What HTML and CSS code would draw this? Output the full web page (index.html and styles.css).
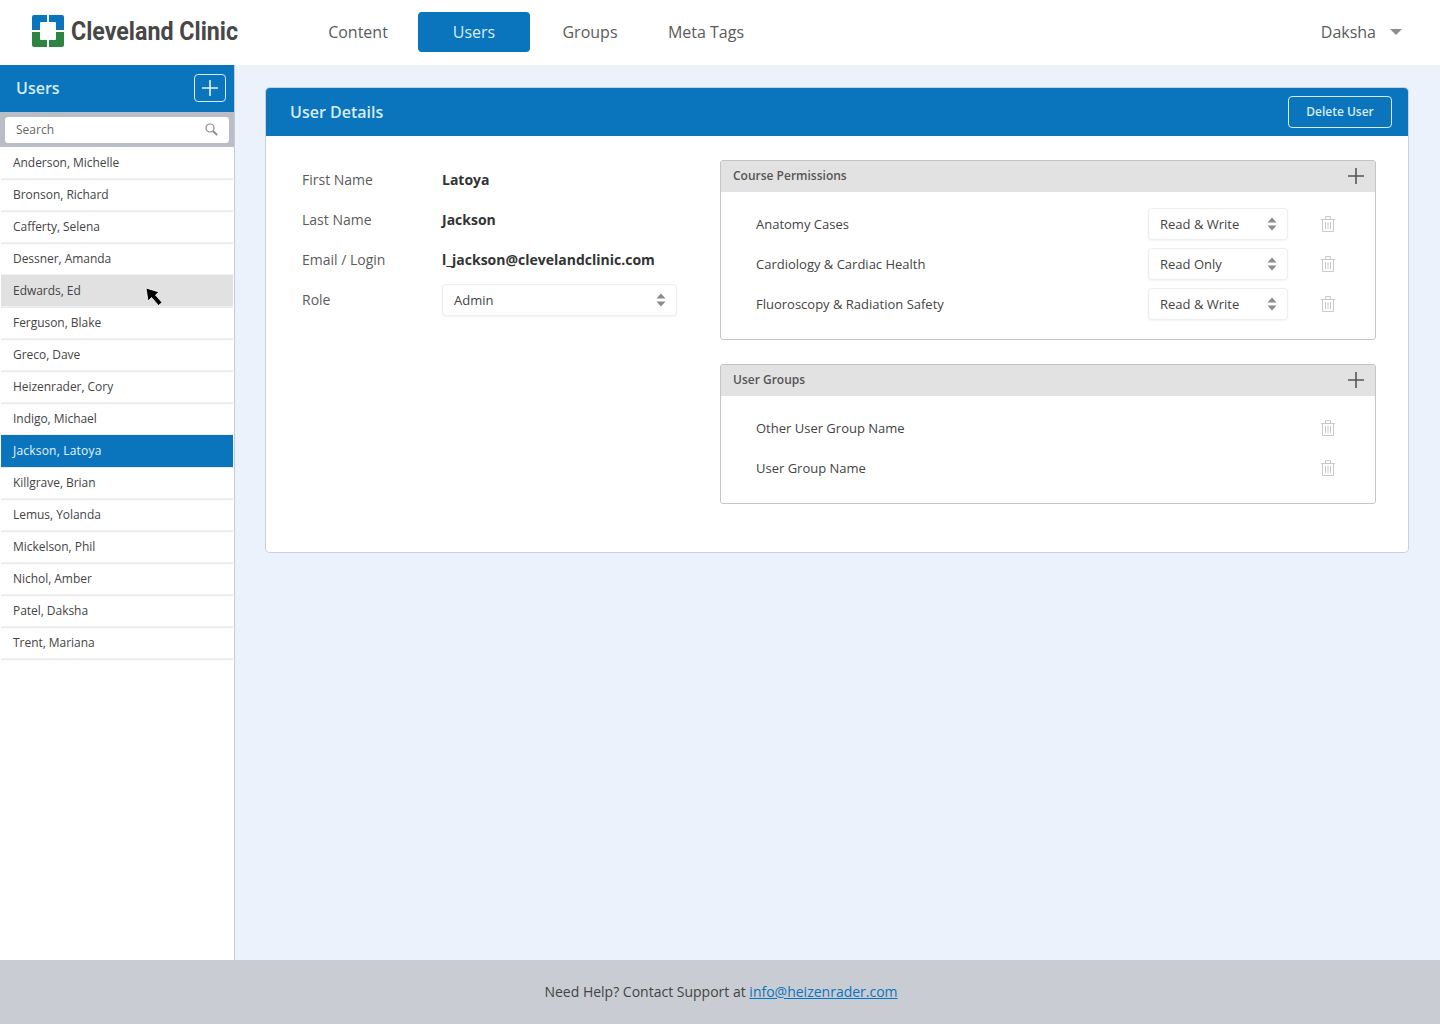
FILE: index.html
```html
<!DOCTYPE html>
<html lang="en">
<head>
<meta charset="utf-8">
<title>Users</title>
<link rel="stylesheet" href="styles.css">
</head>
<body>
<svg class="sprites" width="0" height="0" aria-hidden="true">
  <symbol id="updown" viewBox="0 0 10 14"><path d="M5 0.5 9.5 5.5H0.5Z M5 13.5 0.5 8.5H9.5Z" fill="#8b8b8b"/></symbol>
  <symbol id="trash" viewBox="0 0 14 16"><path d="M1.5 3.5V15.5H12.5V3.5M0 3.5H14M4.5 3.5V0.5H9.5V3.5M4.5 6V13M7 6V13M9.5 6V13" fill="none" stroke="#c9c9c9"/></symbol>
  <symbol id="plus" viewBox="0 0 16 16"><path d="M8 0V16M0 8H16" fill="none" stroke-width="1.6" stroke="currentColor"/></symbol>
</svg>
<header class="topbar">
  <div class="logo">
    <svg class="logo-mark" viewBox="0 0 32 32" width="32" height="32">
      <path d="M2 0H15V7H9Q8 7 8 8V15H0V2Q0 0 2 0Z M17 0H30Q32 0 32 2V15H24V8Q24 7 23 7H17Z" fill="#0a74bc"/>
      <path d="M0 17H8V24Q8 25 9 25H15V32H2Q0 32 0 30Z M32 17V30Q32 32 30 32H17V25H23Q24 25 24 24V17Z" fill="#2c8542"/>
    </svg>
    <span class="logo-text">Cleveland Clinic</span>
  </div>
  <nav class="nav">
    <a class="nav-item">Content</a>
    <a class="nav-item is-active">Users</a>
    <a class="nav-item">Groups</a>
    <a class="nav-item">Meta Tags</a>
  </nav>
  <div class="user-menu">Daksha <span class="caret"></span></div>
</header>
<div class="content">
  <aside class="sidebar">
    <div class="side-head">
      <span>Users</span>
      <button class="add-btn"><svg width="16" height="16"><use href="#plus"/></svg></button>
    </div>
    <div class="search-wrap">
      <div class="search">
        <span>Search</span>
        <svg width="13" height="13" viewBox="0 0 13 13"><circle cx="5" cy="5" r="4" fill="none" stroke="#8a8a8a" stroke-width="1.2"/><path d="M8 8 12.2 12.2" stroke="#8a8a8a" stroke-width="1.8"/></svg>
      </div>
    </div>
    <ul class="user-list">
      <li>Anderson, Michelle</li>
      <li>Bronson, Richard</li>
      <li>Cafferty, Selena</li>
      <li>Dessner, Amanda</li>
      <li class="is-hover">Edwards, Ed
        <svg class="cursor" width="20" height="22" viewBox="0 0 20 22"><path d="M2 2 4 15 7.5 11.5 14.5 19.5 18 16.5 11.5 9 15 6Z" fill="#000" stroke="#fff" stroke-opacity=".8" stroke-width="1"/></svg>
      </li>
      <li>Ferguson, Blake</li>
      <li>Greco, Dave</li>
      <li>Heizenrader, Cory</li>
      <li>Indigo, Michael</li>
      <li class="is-selected">Jackson, Latoya</li>
      <li>Killgrave, Brian</li>
      <li>Lemus, Yolanda</li>
      <li>Mickelson, Phil</li>
      <li>Nichol, Amber</li>
      <li>Patel, Daksha</li>
      <li>Trent, Mariana</li>
    </ul>
  </aside>
  <main class="main">
    <section class="card">
      <div class="card-head">
        <h1>User Details</h1>
        <button class="delete-btn">Delete User</button>
      </div>
      <div class="card-body">
        <div class="fields">
          <div class="field"><span class="label">First Name</span><strong>Latoya</strong></div>
          <div class="field"><span class="label">Last Name</span><strong>Jackson</strong></div>
          <div class="field"><span class="label">Email / Login</span><strong>l_jackson@clevelandclinic.com</strong></div>
          <div class="field"><span class="label">Role</span>
            <div class="select select-wide">Admin<svg width="10" height="14"><use href="#updown"/></svg></div>
          </div>
        </div>
        <div class="panels">
          <div class="panel">
            <div class="panel-head"><span>Course Permissions</span><svg width="16" height="16"><use href="#plus"/></svg></div>
            <div class="panel-body perms">
              <div class="row"><span class="row-name">Anatomy Cases</span><div class="select">Read &amp; Write<svg width="10" height="14"><use href="#updown"/></svg></div><svg class="trash" width="14" height="16"><use href="#trash"/></svg></div>
              <div class="row"><span class="row-name">Cardiology &amp; Cardiac Health</span><div class="select">Read Only<svg width="10" height="14"><use href="#updown"/></svg></div><svg class="trash" width="14" height="16"><use href="#trash"/></svg></div>
              <div class="row"><span class="row-name">Fluoroscopy &amp; Radiation Safety</span><div class="select">Read &amp; Write<svg width="10" height="14"><use href="#updown"/></svg></div><svg class="trash" width="14" height="16"><use href="#trash"/></svg></div>
            </div>
          </div>
          <div class="panel">
            <div class="panel-head"><span>User Groups</span><svg width="16" height="16"><use href="#plus"/></svg></div>
            <div class="panel-body groups">
              <div class="row"><span class="row-name">Other User Group Name</span><svg class="trash" width="14" height="16"><use href="#trash"/></svg></div>
              <div class="row"><span class="row-name">User Group Name</span><svg class="trash" width="14" height="16"><use href="#trash"/></svg></div>
            </div>
          </div>
        </div>
      </div>
    </section>
  </main>
</div>
<footer class="footer">Need Help? Contact Support at&nbsp;<a href="#">info@heizenrader.com</a></footer>
</body>
</html>
```

FILE: styles.css
```css
* { box-sizing: border-box; }
html, body { margin: 0; height: 100%; }
body {
  width: 1440px;
  height: 1024px;
  display: flex;
  flex-direction: column;
  font-family: "Open Sans", sans-serif;
  color: #444;
  background: #ebf2fb;
  overflow: hidden;
}
.sprites { position: absolute; }

.topbar {
  height: 65px;
  flex: none;
  background: #fff;
  display: flex;
  align-items: center;
  padding: 0 38px 1px 32px;
}
.logo { display: flex; align-items: center; gap: 7px; width: 270px; height: 32px; }
.logo-mark { flex: none; margin-top: -2px; }
.logo-text {
  font-family: "Roboto", sans-serif;
  font-weight: 700;
  font-size: 26px;
  line-height: 32px;
  color: #474747;
  white-space: nowrap;
  margin-top: -3px;
  transform: scaleX(.893);
  transform-origin: left center;
}
.nav { display: flex; align-items: center; gap: 4px; }
.nav-item {
  width: 112px;
  height: 40px;
  display: flex;
  align-items: center;
  justify-content: center;
  font-size: 16px;
  color: #5b5b5b;
  border-radius: 4px;
}
.nav-item.is-active { background: #0a74bc; color: #d6ecfb; }
.user-menu {
  margin-left: auto;
  display: flex;
  align-items: center;
  font-size: 16px;
  color: #5b5b5b;
}
.caret {
  width: 0;
  height: 0;
  margin-left: 14px;
  border-left: 6px solid transparent;
  border-right: 6px solid transparent;
  border-top: 6px solid #8d8d8d;
}

.content { flex: 1; display: flex; min-height: 0; }
.sidebar {
  width: 235px;
  flex: none;
  background: #fff;
  border-right: 1px solid #c3cbd8;
  display: flex;
  flex-direction: column;
}
.side-head {
  height: 47px;
  background: #0a74bc;
  color: #d6ecfb;
  display: flex;
  align-items: center;
  justify-content: space-between;
  padding: 0 8px 2px 16px;
  font-size: 16px;
  font-weight: 600;
}
.add-btn {
  width: 32px;
  height: 28px;
  padding: 0;
  display: flex;
  align-items: center;
  justify-content: center;
  background: transparent;
  border: 1px solid #d6ecfb;
  border-radius: 4px;
  color: #e6f4fd;
}
.search-wrap { height: 35px; background: #b9bdc5; padding: 5px; }
.search {
  height: 26px;
  background: #fff;
  border-radius: 3px;
  display: flex;
  align-items: center;
  justify-content: space-between;
  padding: 0 11px 2px;
  font-size: 12px;
  color: #666;
}
.user-list { list-style: none; margin: 0; padding: 0 1px; }
.user-list li {
  position: relative;
  height: 32px;
  display: flex;
  align-items: center;
  padding: 0 12px;
  font-size: 12px;
  letter-spacing: -0.04px;
  color: #444;
  border-bottom: 1px solid #f1f1f1;
  box-shadow: 0 1px 0 #e9e9e9;
}
.user-list li.is-hover { background: #e1e1e1; }
.user-list li.is-selected {
  background: #0a74bc;
  color: #e6f4fd;
  letter-spacing: 0.2px;
  border-bottom-color: #0a74bc;
}
.cursor { position: absolute; left: 143px; top: 11px; }

.main { flex: 1; padding: 23px 32px 0 31px; }
.card {
  height: 464px;
  background: #fff;
  border-radius: 4px;
  box-shadow: 0 0 0 1px #c8d0dc;
  overflow: hidden;
}
.card-head {
  height: 48px;
  background: #0a74bc;
  display: flex;
  align-items: center;
  justify-content: space-between;
  padding: 0 16px 0 24px;
  color: #d6ecfb;
}
.card-head h1 { margin: 0; font-size: 16px; font-weight: 600; }
.delete-btn {
  width: 104px;
  height: 32px;
  padding: 0 0 2px;
  background: transparent;
  border: 1px solid #d6ecfb;
  border-radius: 4px;
  color: #d6ecfb;
  font: 600 12px "Open Sans", sans-serif;
}
.card-body { display: flex; padding: 24px 32px 0 36px; }
.fields { width: 418px; flex: none; }
.field { height: 40px; display: flex; align-items: center; font-size: 14px; }
.field strong { color: #333; font-weight: 700; padding-bottom: 2px; }
.label { width: 140px; flex: none; color: #5b5b5b; padding-bottom: 2px; }
.select {
  width: 140px;
  height: 32px;
  display: flex;
  align-items: center;
  justify-content: space-between;
  padding: 0 10px 0 11px;
  border: 1px solid #eee;
  border-radius: 4px;
  box-shadow: 0 1px 2px rgba(0,0,0,.05);
  background: #fff;
  font-size: 13px;
  color: #444;
}
.select-wide { width: 235px; }
.panels { flex: 1; display: flex; flex-direction: column; gap: 24px; }
.panel { border: 1px solid #c4c4c4; border-radius: 3px; overflow: hidden; }
.panel-head {
  height: 31px;
  background: #e2e2e2;
  display: flex;
  align-items: center;
  justify-content: space-between;
  padding: 0 11px 2px 12px;
  font-size: 12px;
  font-weight: 600;
  color: #555;
}
.panel-head svg { color: #555; }
.panel-body { padding: 12px 40px 0 35px; }
.perms { height: 147px; }
.groups { height: 107px; }
.row { height: 40px; display: flex; align-items: center; font-size: 13px; color: #444; }
.row-name { flex: 1; }
.trash { margin-left: 33px; flex: none; }
.footer {
  height: 64px;
  flex: none;
  background: #c9ccd3;
  display: flex;
  align-items: center;
  justify-content: center;
  padding: 0 0 2px 2px;
  font-size: 14px;
  color: #444;
}
.footer a { color: #0a74bc; }
```
